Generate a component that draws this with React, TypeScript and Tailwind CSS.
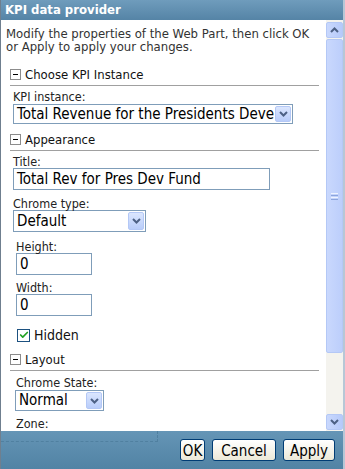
import { Check } from "lucide-react";

function Chevron({ up = false }: { up?: boolean }) {
  return (
    <svg width="9" height="6" viewBox="0 0 9 6" className={up ? "rotate-180" : ""}>
      <polyline points="1,1 4.5,4.5 8,1" fill="none" stroke="#4d6185" strokeWidth="2" />
    </svg>
  );
}

function DropButton() {
  return (
    <div className="flex w-[16px] items-center justify-center self-stretch m-[1px] rounded-[2px] border border-[#b4c8f6] bg-gradient-to-b from-[#dbe6fe] to-[#b9cdfa]">
      <Chevron />
    </div>
  );
}

function FakeSelect({ value, className }: { value: string; className: string }) {
  return (
    <div className={`flex items-stretch border border-[#7f9db9] bg-white ${className}`}>
      <div className="flex flex-1 items-center overflow-hidden whitespace-nowrap pl-[3px] text-[15px] text-black">
        {value}
      </div>
      <DropButton />
    </div>
  );
}

function FakeInput({ value, className }: { value: string; className: string }) {
  return (
    <div className={`flex items-center border border-[#7f9db9] bg-white pl-[3px] text-[15px] text-black ${className}`}>
      {value}
    </div>
  );
}

function SectionHead({ title, className }: { title: string; className: string }) {
  return (
    <div className={`ml-[9px] mr-[7px] flex h-[18px] items-start border-b border-[#a0a0a0] ${className}`}>
      <div className="mt-[1px] flex h-[11px] w-[11px] items-center justify-center border border-[#8c8c8c] bg-white">
        <div className="h-[1px] w-[5px] bg-black" />
      </div>
      <span className="ml-[4px] text-[13px] leading-[14px] text-[#111]">{title}</span>
    </div>
  );
}

export default function App() {
  return (
    <div className="relative flex h-[469px] w-[345px] flex-col overflow-hidden border-l border-l-[#6f7f8f] border-r-2 border-r-[#b7c7d6] bg-white font-['DejaVu_Sans_Condensed','Liberation_Sans',sans-serif]">
      {/* HEADER */}
      <div className="flex h-[20px] items-center bg-gradient-to-b from-[#6f9cbc] to-[#5584a6] pl-[4px] text-[13px] font-bold text-white">
        KPI data provider
      </div>

      {/* BODY */}
      <div className="flex h-[411px]">
        <div className="flex-1 overflow-hidden text-[12.5px] text-[#222]">
          <p className="px-[5px] pt-[7px] text-[13px] leading-[13px] text-[#333]">
            Modify the properties of the Web Part, then click OK or Apply to apply your changes.
          </p>

          <SectionHead title="Choose KPI Instance" className="mt-[15px]" />
          <div className="ml-[12px] mt-[4px] leading-[13px]">KPI instance:</div>
          <FakeSelect value="Total Revenue for the Presidents Deve" className="ml-[12px] mt-[1px] h-[20px] w-[280px]" />

          <SectionHead title="Appearance" className="mt-[9px]" />
          <div className="ml-[12px] mt-[4px] leading-[13px]">Title:</div>
          <FakeInput value="Total Rev for Pres Dev Fund" className="ml-[12px] h-[22px] w-[257px]" />

          <div className="ml-[12px] mt-[7px] leading-[13px]">Chrome type:</div>
          <FakeSelect value="Default" className="ml-[12px] h-[22px] w-[133px]" />

          <div className="ml-[15px] mt-[8px] leading-[13px]">Height:</div>
          <FakeInput value="0" className="ml-[15px] h-[22px] w-[76px]" />
          <div className="ml-[15px] mt-[6px] leading-[13px]">Width:</div>
          <FakeInput value="0" className="ml-[15px] h-[22px] w-[76px]" />

          <div className="ml-[16px] mt-[12px] flex items-center gap-[4px]">
            <div className="flex h-[13px] w-[13px] items-center justify-center border border-[#1c5180] bg-white">
              <Check size={10} strokeWidth={4} color="#21a121" />
            </div>
            <span className="text-[14px] leading-[14px] text-[#111]">Hidden</span>
          </div>

          <SectionHead title="Layout" className="mt-[11px]" />
          <div className="ml-[15px] mt-[5px] leading-[13px]">Chrome State:</div>
          <FakeSelect value="Normal" className="ml-[14px] mt-[1px] h-[21px] w-[89px]" />
          <div className="ml-[15px] mt-[6px] leading-[13px]">Zone:</div>
        </div>

        {/* SCROLLBAR */}
        <div className="flex w-[17px] flex-col bg-[#f4f3ee] pb-[1px] pt-[2px]">
          <div className="flex h-[16px] items-center justify-center rounded-[2px] border border-[#b4c8f6] bg-gradient-to-r from-[#c9d8fd] to-[#b6cafa]">
            <Chevron up />
          </div>
          <div className="mt-[1px] flex h-[314px] items-center justify-center rounded-[2px] border border-[#b4c8f6] bg-gradient-to-r from-[#c9d8fd] to-[#bccefb]">
            <div className="flex flex-col gap-[1px]">
              <div className="h-[1px] w-[7px] bg-[#eef3fe]" />
              <div className="h-[1px] w-[7px] bg-[#8ca5dc]" />
              <div className="h-[1px] w-[7px] bg-[#eef3fe]" />
              <div className="h-[1px] w-[7px] bg-[#8ca5dc]" />
            </div>
          </div>
          <div className="flex-1" />
          <div className="flex h-[16px] items-center justify-center rounded-[2px] border border-[#b4c8f6] bg-gradient-to-r from-[#c9d8fd] to-[#b6cafa]">
            <Chevron />
          </div>
        </div>
      </div>

      {/* FOOTER */}
      <div className="relative flex flex-1 items-start justify-end gap-[7px] bg-gradient-to-b from-[#6595b6] to-[#5183a4] pr-[8px] pt-[8px]">
        <div className="absolute left-0 top-0 h-[11px] w-[157px] border-b border-r border-dashed border-[#5080a0]" />
        <button className="h-[22px] w-[25px] rounded-[3px] border border-[#003c74] bg-gradient-to-b from-white to-[#ece9d8] text-[15px] text-black">
          OK
        </button>
        <button className="h-[22px] w-[64px] rounded-[3px] border border-[#003c74] bg-gradient-to-b from-white to-[#ece9d8] text-[15px] text-black">
          Cancel
        </button>
        <button className="h-[22px] w-[52px] rounded-[3px] border border-[#003c74] bg-gradient-to-b from-white to-[#ece9d8] text-[15px] text-black">
          Apply
        </button>
      </div>
    </div>
  );
}
